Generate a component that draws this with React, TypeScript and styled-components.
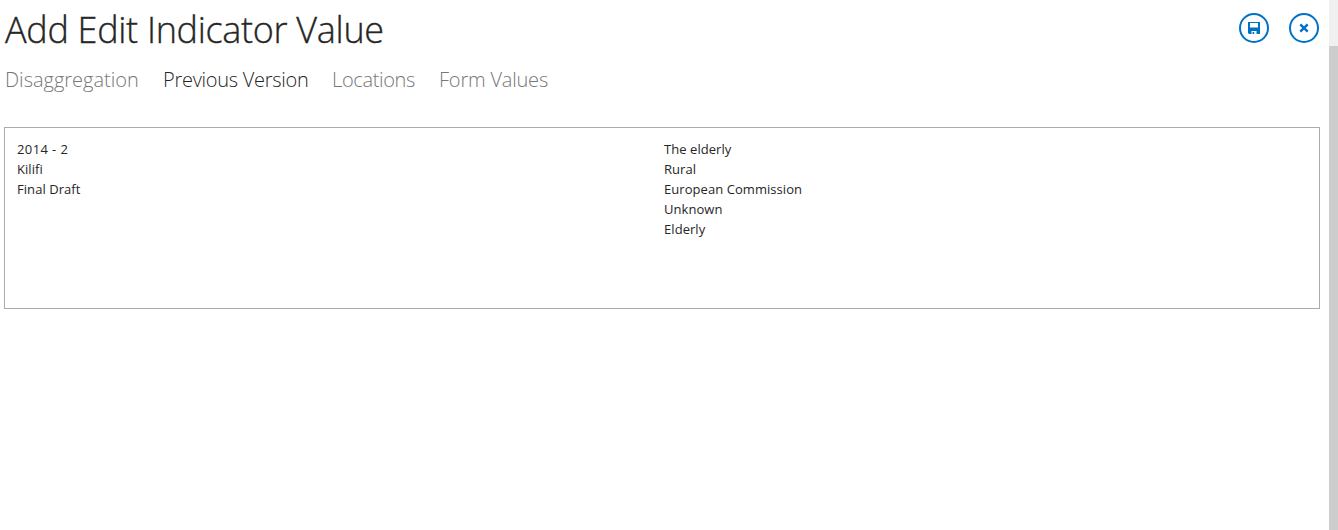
import React from "react";
import styled, { createGlobalStyle } from "styled-components";

const GlobalStyle = createGlobalStyle`
  * { box-sizing: border-box; }
  body { margin: 0; background: #fff; overflow: hidden; font-family: "Open Sans", "Noto Sans", sans-serif; }
`;

const Page = styled.div`
  display: flex;
  width: 100%;
  height: 100vh;
`;

const Main = styled.main`
  flex: 1;
  min-width: 0;
  padding: 0 9px 0 4px;
`;

const Header = styled.header`
  display: flex;
  justify-content: space-between;
  height: 60px;
  padding: 4px 1px 0 1px;
`;

const Title = styled.h1`
  margin: 0;
  padding-top: 1px;
  font-size: 36px;
  font-weight: 300;
  line-height: 50px;
  letter-spacing: -0.31px;
  color: #262626;
  -webkit-text-stroke: 0.35px #262626;
  white-space: nowrap;
`;

const Actions = styled.div`
  display: flex;
  gap: 20px;
  padding-top: 9px;
`;

const RoundButton = styled.button`
  display: flex;
  align-items: center;
  justify-content: center;
  width: 30px;
  height: 30px;
  padding: 0;
  border: 2px solid #0072c6;
  border-radius: 50%;
  background: #fff;
  color: #0072c6;
`;

const Tabs = styled.nav`
  display: flex;
  gap: 24px;
  height: 67px;
  padding: 6px 0 0 1px;
`;

const Tab = styled.a<{ $active?: boolean; $width: number; $spacing: number }>`
  width: ${(p) => p.$width}px;
  font-size: 20px;
  font-weight: 300;
  line-height: 28px;
  letter-spacing: ${(p) => p.$spacing}px;
  white-space: nowrap;
  color: ${(p) => (p.$active ? "#262626" : "#777")};
`;

const Panel = styled.section`
  display: grid;
  grid-template-columns: 647px 1fr;
  height: 182px;
  padding: 11px 12px;
  border: 1px solid #ababab;
`;

const List = styled.ul`
  margin: 0;
  padding: 0;
  list-style: none;
`;

const Item = styled.li<{ $spacing?: number }>`
  font-size: 13px;
  line-height: 20px;
  letter-spacing: ${(p) => p.$spacing ?? 0.06}px;
  color: #262626;
`;

const ScrollTrack = styled.div`
  width: 9px;
  padding-top: 46px;
  background: #f0f0f0;
`;

const ScrollThumb = styled.div`
  height: 100%;
  background: #cdcdcd;
`;

const tabs = [
  { label: "Disaggregation", width: 134, spacing: 0 },
  { label: "Previous Version", width: 145, spacing: -0.28, active: true },
  { label: "Locations", width: 83, spacing: -0.35 },
  { label: "Form Values", width: 110, spacing: -0.2 },
];
const summary = [
  { label: "2014 - 2", spacing: 0.4 },
  { label: "Kilifi" },
  { label: "Final Draft" },
];
const groups = ["The elderly", "Rural", "European Commission", "Unknown", "Elderly"];

export default function App() {
  return (
    <>
      <GlobalStyle />
      <Page>
        <Main>
          <Header>
            <Title>Add Edit Indicator Value</Title>
            <Actions>
              <RoundButton aria-label="Save">
                <svg width="12" height="12" viewBox="0 0 12 12" fill="currentColor">
                  <path fillRule="evenodd" d="M0 0H12V12H8.5V9H3.5V12H1L0 11ZM2 1V5.5H10V1Z" />
                  <path d="M4.5 10H6.2V12H4.5Z" />
                </svg>
              </RoundButton>
              <RoundButton aria-label="Close">
                <svg width="10" height="10" viewBox="0 0 10 10" fill="none" stroke="currentColor" strokeWidth="2.4">
                  <path d="M1.3 1.3L8.7 8.7M8.7 1.3L1.3 8.7" />
                </svg>
              </RoundButton>
            </Actions>
          </Header>
          <Tabs>
            {tabs.map((t) => (
              <Tab key={t.label} $active={t.active} $width={t.width} $spacing={t.spacing}>{t.label}</Tab>
            ))}
          </Tabs>
          <Panel>
            <List>{summary.map((s) => <Item key={s.label} $spacing={s.spacing}>{s.label}</Item>)}</List>
            <List>{groups.map((s) => <Item key={s}>{s}</Item>)}</List>
          </Panel>
        </Main>
        <ScrollTrack><ScrollThumb /></ScrollTrack>
      </Page>
    </>
  );
}
